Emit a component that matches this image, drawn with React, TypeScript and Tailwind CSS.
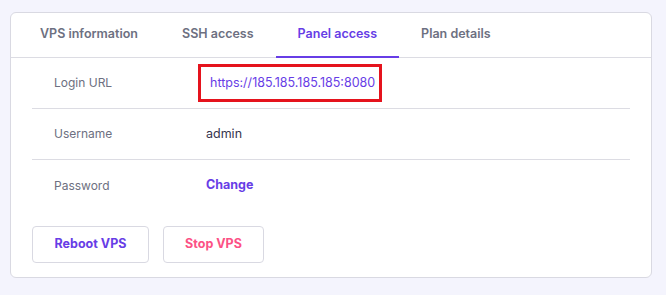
import React from "react"

const tabs = ["VPS information", "SSH access", "Panel access", "Plan details"]

function Row({ label, children, last }: { label: string; children: React.ReactNode; last?: boolean }) {
  return (
    <div className={`flex items-center h-[51px] px-[22px] ${last ? "" : "border-b border-[#dcdce3]"}`}>
      <div className="w-[152px] shrink-0 text-[12px] text-[#6d7081]">{label}</div>
      <div className="flex items-center">{children}</div>
    </div>
  )
}

export default function App() {
  return (
    <div
      className="min-h-[295px] bg-[#f4f4fd] pt-[12px] pl-[10px] pr-[14px] pb-[17px]"
      style={{ fontFamily: "Inter, 'Noto Sans', sans-serif" }}
    >
      <div className="w-[642px] h-[266px] bg-white border border-[#d9d9e2] rounded-[6px]">
        {/* Tabs */}
        <div className="flex h-[45px] border-b border-[#dcdce3] pl-[7px]">
          {tabs.map((t) => {
            const active = t === "Panel access"
            return (
              <div
                key={t}
                className={`flex items-center px-[22px] text-[12.5px] font-semibold border-b-2 -mb-px ${
                  active ? "text-[#673de6] border-[#673de6]" : "text-[#6d7081] border-transparent"
                }`}
              >
                {t}
              </div>
            )
          })}
        </div>

        {/* Rows */}
        <div className="mx-[21px]">
          <Row label="Login URL">
            <div className="-ml-[8px] flex items-center h-[38px] w-[184px] px-[9px] border-[3px] border-[#e5131d]">
              <span className="text-[12.5px] text-[#673de6]">https://185.185.185.185:8080</span>
            </div>
          </Row>
          <Row label="Username">
            <span className="text-[12.5px] text-[#36344d]">admin</span>
          </Row>
          <Row label="Password" last>
            <span className="text-[12.5px] font-bold text-[#673de6]">Change</span>
          </Row>

          <div className="flex gap-[14px] mt-[15px]">
            <button className="h-[37px] w-[117px] border border-[#d9d9e2] rounded-[4px] text-[12.5px] font-bold text-[#673de6] bg-white">
              Reboot VPS
            </button>
            <button className="h-[37px] w-[101px] border border-[#d9d9e2] rounded-[4px] text-[12.5px] font-bold text-[#fc5185] bg-white">
              Stop VPS
            </button>
          </div>
        </div>
      </div>
    </div>
  )
}
